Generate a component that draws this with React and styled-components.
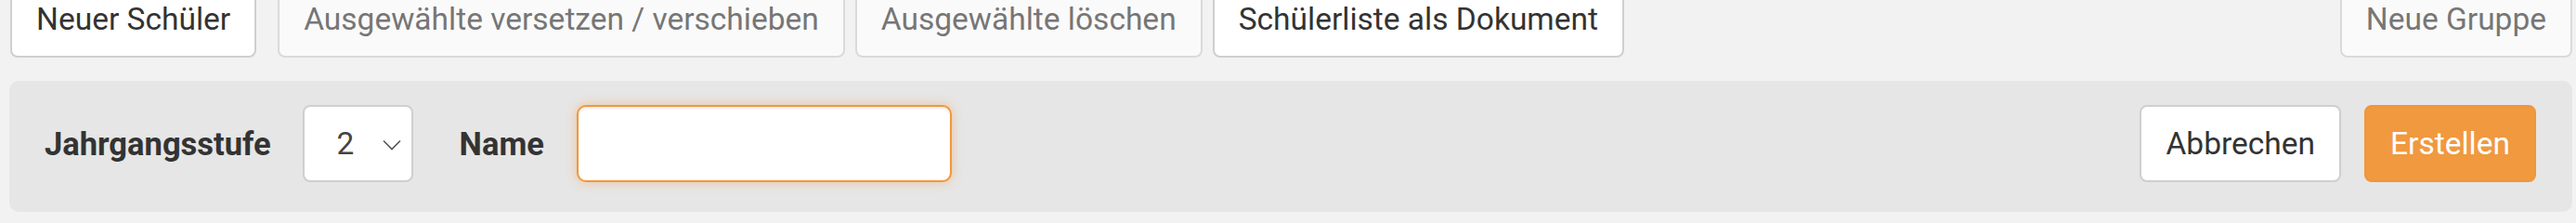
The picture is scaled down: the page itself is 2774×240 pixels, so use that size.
import React from "react";
import styled, { createGlobalStyle, css } from "styled-components";

const Global = createGlobalStyle`
  html, body {
    margin: 0;
    padding: 0;
    background: #f2f2f2;
    font-family: Roboto, "Liberation Sans", Arial, sans-serif;
    overflow: hidden;
  }
  * { box-sizing: border-box; }
`;

const FONT = "33.5px";

const Page = styled.div`
  padding: 0 4px 0 10px;
`;

const Toolbar = styled.div`
  display: flex;
  align-items: center;
  margin-top: -21px;
  padding-left: 1px;
`;

const Group = styled.div`
  display: flex;
  gap: 11px;
  margin-left: ${(p) => p.$offset || 0}px;
`;

const Spacer = styled.div`
  flex: 1;
`;

const Button = styled.button`
  display: inline-flex;
  align-items: center;
  justify-content: center;
  height: 83px;
  padding: 0 26px;
  border-radius: 8px;
  font-family: inherit;
  font-size: ${FONT};
  font-weight: 400;
  white-space: nowrap;
  cursor: pointer;
  border: 2px solid #cfcfcf;
  background: #ffffff;
  color: #333333;
  ${(p) =>
    p.$muted &&
    css`
      background: #fafafa;
      border-color: #dadada;
      color: #767676;
    `}
  ${(p) =>
    p.$primary &&
    css`
      background: #f0993f;
      border-color: #ef963a;
      color: #ffffff;
    `}
`;

const Panel = styled.div`
  display: flex;
  align-items: center;
  margin-top: 25px;
  padding: 26px 39px 32px 38px;
  background: #e6e6e6;
  border-radius: 10px;
`;

const Label = styled.label`
  font-size: 34.5px;
  font-weight: 700;
  color: #333333;
  margin-right: ${(p) => p.$gap}px;
`;

const Select = styled.div`
  display: flex;
  align-items: center;
  justify-content: space-between;
  width: 119px;
  height: 83px;
  padding: 0 11px 0 35px;
  background: #ffffff;
  border: 2px solid #cfcfcf;
  border-radius: 8px;
  font-size: ${FONT};
  color: #444444;
  margin-right: 50px;
`;

const Chevron = styled.svg`
  width: 20px;
  height: 12px;
  margin-top: 2px;
`;

const Input = styled.input`
  width: 404px;
  height: 83px;
  border: 2px solid #f2983b;
  border-radius: 10px;
  background: #ffffff;
  outline: none;
  font-family: inherit;
  font-size: ${FONT};
  padding: 0 20px;
  box-shadow: 0 0 12px rgba(240, 150, 60, 0.45), inset 0 2px 3px rgba(0, 0, 0, 0.08);
`;

const Actions = styled.div`
  display: flex;
  gap: 25px;
  margin-left: auto;
`;

export default function App() {
  return (
    <Page>
      <Global />
      <Toolbar>
        <Button>Neuer Schüler</Button>
        <Group $offset={23}>
          <Button $muted>Ausgewählte versetzen / verschieben</Button>
          <Button $muted>Ausgewählte löschen</Button>
          <Button>Schülerliste als Dokument</Button>
        </Group>
        <Spacer />
        <Button $muted>Neue Gruppe</Button>
      </Toolbar>
      <Panel>
        <Label $gap={34}>Jahrgangsstufe</Label>
        <Select>
          <span>2</span>
          <Chevron viewBox="0 0 20 12" fill="none">
            <path d="M1 1.5 L10 10.5 L19 1.5" stroke="#555" strokeWidth="1.6" />
          </Chevron>
        </Select>
        <Label $gap={35}>Name</Label>
        <Input type="text" />
        <Actions>
          <Button>Abbrechen</Button>
          <Button $primary>Erstellen</Button>
        </Actions>
      </Panel>
    </Page>
  );
}
